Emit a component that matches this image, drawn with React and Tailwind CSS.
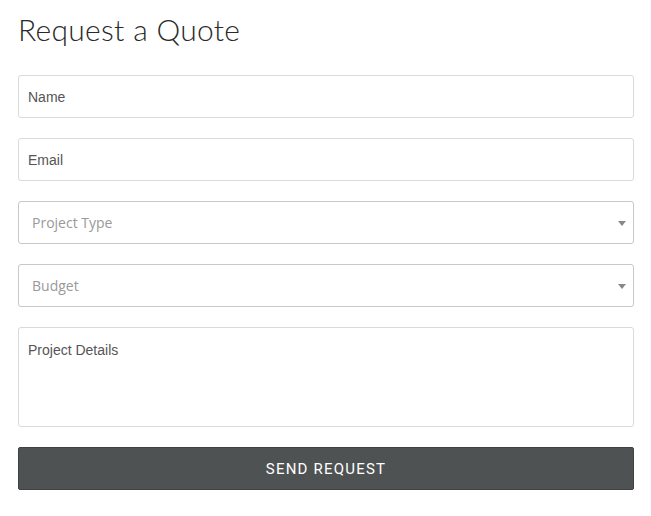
import React from "react";

const inputBase =
  "block w-full h-[43px] rounded-[3px] border border-[#dadada] bg-white px-[9px] text-[14px] text-[#555] placeholder:text-[#555] outline-none";

const SelectField = ({ label }) => (
  <div className="relative">
    <select
      defaultValue=""
      className="block w-full h-[43px] appearance-none rounded-[3px] border border-[#c8c8c8] bg-white pl-[13px] pr-8 text-[14px] text-[#999] outline-none"
      style={{ fontFamily: '"Open Sans", sans-serif' }}
    >
      <option value="" disabled>
        {label}
      </option>
    </select>
    {/* caret */}
    <span className="pointer-events-none absolute right-[8px] top-[20px] h-0 w-0 border-x-[4px] border-t-[5px] border-x-transparent border-t-[#888]" />
  </div>
);

export default function App() {
  return (
    <div className="min-h-[516px] w-full bg-white pl-[18px] pr-[17px] pt-[10px]">
      <h1 className="mb-[27px] text-[30px] font-light leading-[38px] text-[#2a2a2a] font-['Lato',sans-serif] tracking-[0.3px]">
        Request a Quote
      </h1>

      <form className="flex flex-col gap-[20px] font-['Liberation_Sans',Arial,sans-serif]">
        <input type="text" placeholder="Name" className={inputBase} />
        <input type="email" placeholder="Email" className={inputBase} />
        <SelectField label="Project Type" />
        <SelectField label="Budget" />
        <textarea
          placeholder="Project Details"
          className="block h-[100px] w-full resize-none rounded-[3px] border border-[#dadada] bg-white px-[9px] py-[13px] text-[14px] leading-[18px] text-[#555] placeholder:text-[#555] outline-none"
        />
        <button
          type="button"
          className="h-[43px] w-full rounded-[2px] border border-[#3f4344] bg-[#4f5253] pt-[2px] text-[15px] tracking-[1.2px] text-white font-['Roboto',sans-serif]"
        >
          SEND REQUEST
        </button>
      </form>
    </div>
  );
}
